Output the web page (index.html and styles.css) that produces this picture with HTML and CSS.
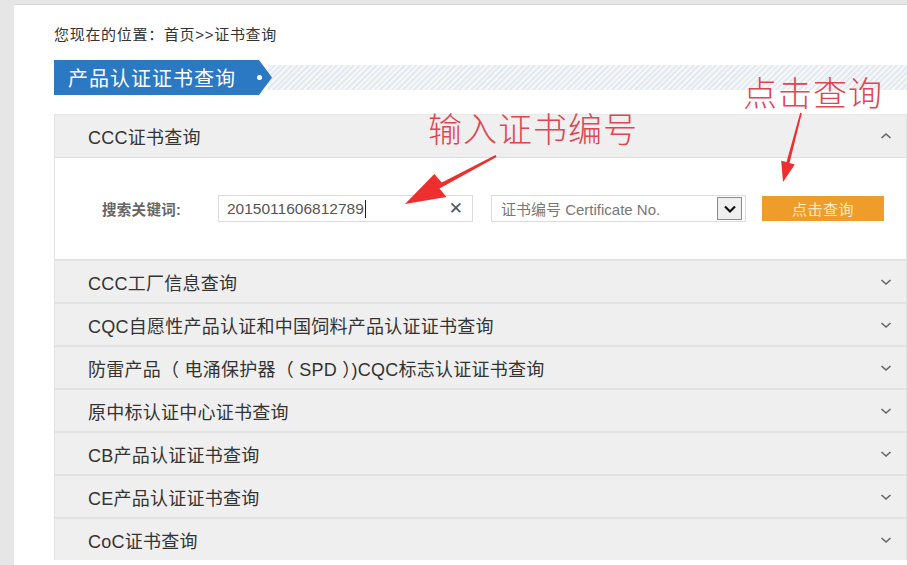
FILE: index.html
```html
<!DOCTYPE html>
<html lang="zh-CN">
<head>
<meta charset="utf-8">
<title>证书查询</title>
<link rel="stylesheet" href="styles.css">
</head>
<body>
<div class="page">
  <div class="crumb">您现在的位置：首页&gt;&gt;证书查询</div>
  <div class="tabbar">
    <div class="tab"><span class="tab-text">产品认证证书查询</span><span class="dot"></span></div>
    <div class="stripes"></div>
  </div>
  <div class="acc">
    <div class="acc-head open">
      <span>CCC证书查询</span>
      <svg class="chev" viewBox="0 0 12 8"><polyline points="1.5,6 6,2 10.5,6"/></svg>
    </div>
    <div class="acc-body">
      <div class="search">
        <span class="label">搜索关键词:</span>
        <div class="input"><span class="val">2015011606812789</span><span class="cursor"></span><span class="clear">✕</span></div>
        <div class="select"><span class="opt">证书编号 Certificate No.</span><span class="dd"><svg viewBox="0 0 14 10"><polyline points="2,2.5 7,7.5 12,2.5"/></svg></span></div>
        <div class="btn">点击查询</div>
      </div>
    </div>
    <div class="acc-head"><span>CCC工厂信息查询</span><svg class="chev" viewBox="0 0 12 8"><polyline points="1.5,2 6,6 10.5,2"/></svg></div>
    <div class="acc-head"><span>CQC自愿性产品认证和中国饲料产品认证证书查询</span><svg class="chev" viewBox="0 0 12 8"><polyline points="1.5,2 6,6 10.5,2"/></svg></div>
    <div class="acc-head"><span>防雷产品（ 电涌保护器（ SPD ）)CQC标志认证证书查询</span><svg class="chev" viewBox="0 0 12 8"><polyline points="1.5,2 6,6 10.5,2"/></svg></div>
    <div class="acc-head"><span>原中标认证中心证书查询</span><svg class="chev" viewBox="0 0 12 8"><polyline points="1.5,2 6,6 10.5,2"/></svg></div>
    <div class="acc-head"><span>CB产品认证证书查询</span><svg class="chev" viewBox="0 0 12 8"><polyline points="1.5,2 6,6 10.5,2"/></svg></div>
    <div class="acc-head"><span>CE产品认证证书查询</span><svg class="chev" viewBox="0 0 12 8"><polyline points="1.5,2 6,6 10.5,2"/></svg></div>
    <div class="acc-head"><span>CoC证书查询</span><svg class="chev" viewBox="0 0 12 8"><polyline points="1.5,2 6,6 10.5,2"/></svg></div>
  </div>
</div>
<div class="note note-input">输入证书编号</div>
<div class="note note-btn">点击查询</div>
<svg class="arrows" viewBox="0 0 907 565">
  <polygon points="496.5,156.9 495.5,155.1 441.8,182.5 434.3,173.9 405,204 446.4,196.9 439.5,188.5"/>
  <polygon points="801.8,113.2 800.2,112.8 786.5,162 781.2,160.8 783,182 794.8,164.4 789.5,163"/>
</svg>
</body>
</html>
```

FILE: styles.css
```css
html, body {
  margin: 0;
  padding: 0;
}
body {
  width: 907px;
  height: 565px;
  overflow: hidden;
  background: #e6e6e6;
  font-family: "Liberation Sans", "Noto Sans CJK SC", sans-serif;
  color: #333;
  position: relative;
}
.page {
  margin-left: 14px;
  margin-top: 4px;
  background: #fff;
  border-top: 1px solid #d8d8d8;
  padding: 20px 0 0 40px;
  height: 561px;
  overflow: hidden;
  box-sizing: border-box;
}
.crumb {
  font-size: 15px;
  line-height: 20px;
  height: 20px;
  color: #333;
  letter-spacing: 0.7px;
}
.tabbar {
  margin-top: 15px;
  display: flex;
  align-items: center;
  height: 35px;
}
.tab {
  position: relative;
  height: 35px;
  width: 218px;
  background: #2b79c2;
  clip-path: polygon(0 0, 205px 0, 218px 50%, 205px 100%, 0 100%);
  display: flex;
  align-items: center;
  flex: none;
}
.tab-text {
  color: #fff;
  font-size: 20px;
  letter-spacing: 1px;
  padding-left: 14px;
  font-family: "Noto Sans CJK SC", sans-serif;
}
.dot {
  width: 5px;
  height: 5px;
  border-radius: 50%;
  background: #fff;
  margin-left: 21px;
}
.stripes {
  flex: 1;
  height: 25px;
  margin-left: -4px;
  background: repeating-linear-gradient(135deg, #e4eaf0 0 2px, #f4f6f8 2px 4px);
}
.acc {
  margin-top: 19px;
  border-left: 1px solid #e2e2e2;
  border-right: 1px solid #e2e2e2;
}
.acc-head {
  height: 41px;
  background: #efefef;
  border-top: 2px solid #e2e2e2;
  display: flex;
  align-items: center;
  justify-content: space-between;
  padding: 0 14px 0 33px;
  font-size: 18px;
  letter-spacing: 0.25px;
  color: #333;
}
.acc-head.open {
  border-top: 1px solid #e8e8e8;
  height: 42px;
  border-bottom: 1px solid #dcdcdc;
}
.chev {
  width: 12px;
  height: 8px;
  fill: none;
  stroke: #666;
  stroke-width: 1.6;
}
.acc-body {
  background: #fff;
  height: 101px;
  display: flex;
  align-items: center;
}
.search {
  display: flex;
  align-items: center;
  padding-left: 47px;
}
.label {
  font-size: 14.5px;
  font-weight: bold;
  color: #666;
  width: 116px;
  letter-spacing: 0.3px;
}
.input {
  height: 25px;
  border: 1px solid #dcdcdc;
  display: flex;
  align-items: center;
  padding-left: 8px;
  position: relative;
  width: 245px;
}
.val {
  font-size: 15.5px;
  color: #555;
}
.cursor {
  width: 1px;
  height: 18px;
  background: #222;
  margin-left: 1px;
}
.clear {
  position: absolute;
  right: 9px;
  top: 2px;
  font-size: 17px;
  color: #555;
  font-family: "DejaVu Sans", sans-serif;
}
.select {
  margin-left: 18px;
  width: 241px;
  height: 25px;
  border: 1px solid #dcdcdc;
  display: flex;
  align-items: center;
  justify-content: space-between;
  padding: 0 3px 0 9px;
}
.opt {
  font-size: 15px;
  color: #777;
}
.dd {
  width: 23px;
  height: 21px;
  border: 1px solid #8a8a8a;
  background: #efefef;
  display: flex;
  align-items: center;
  justify-content: center;
}
.dd svg {
  width: 14px;
  height: 10px;
  fill: none;
  stroke: #111;
  stroke-width: 2.2;
}
.btn {
  margin-left: 16px;
  width: 122px;
  height: 25px;
  background: #ee9d2b;
  color: #fdebc4;
  font-size: 15px;
  display: flex;
  align-items: center;
  justify-content: center;
  letter-spacing: 0.5px;
  font-family: "Noto Sans CJK SC", sans-serif;
}
.note {
  position: absolute;
  color: #e04552;
  font-family: "Noto Sans CJK SC", sans-serif;
  font-weight: 300;
  font-size: 34px;
  line-height: 40px;
  letter-spacing: 1px;
}
.note-input {
  left: 428px;
  top: 108px;
}
.note-btn {
  left: 743px;
  top: 72px;
}
.arrows {
  position: absolute;
  left: 0;
  top: 0;
  width: 907px;
  height: 565px;
  fill: #ee2f2f;
  pointer-events: none;
}
```
